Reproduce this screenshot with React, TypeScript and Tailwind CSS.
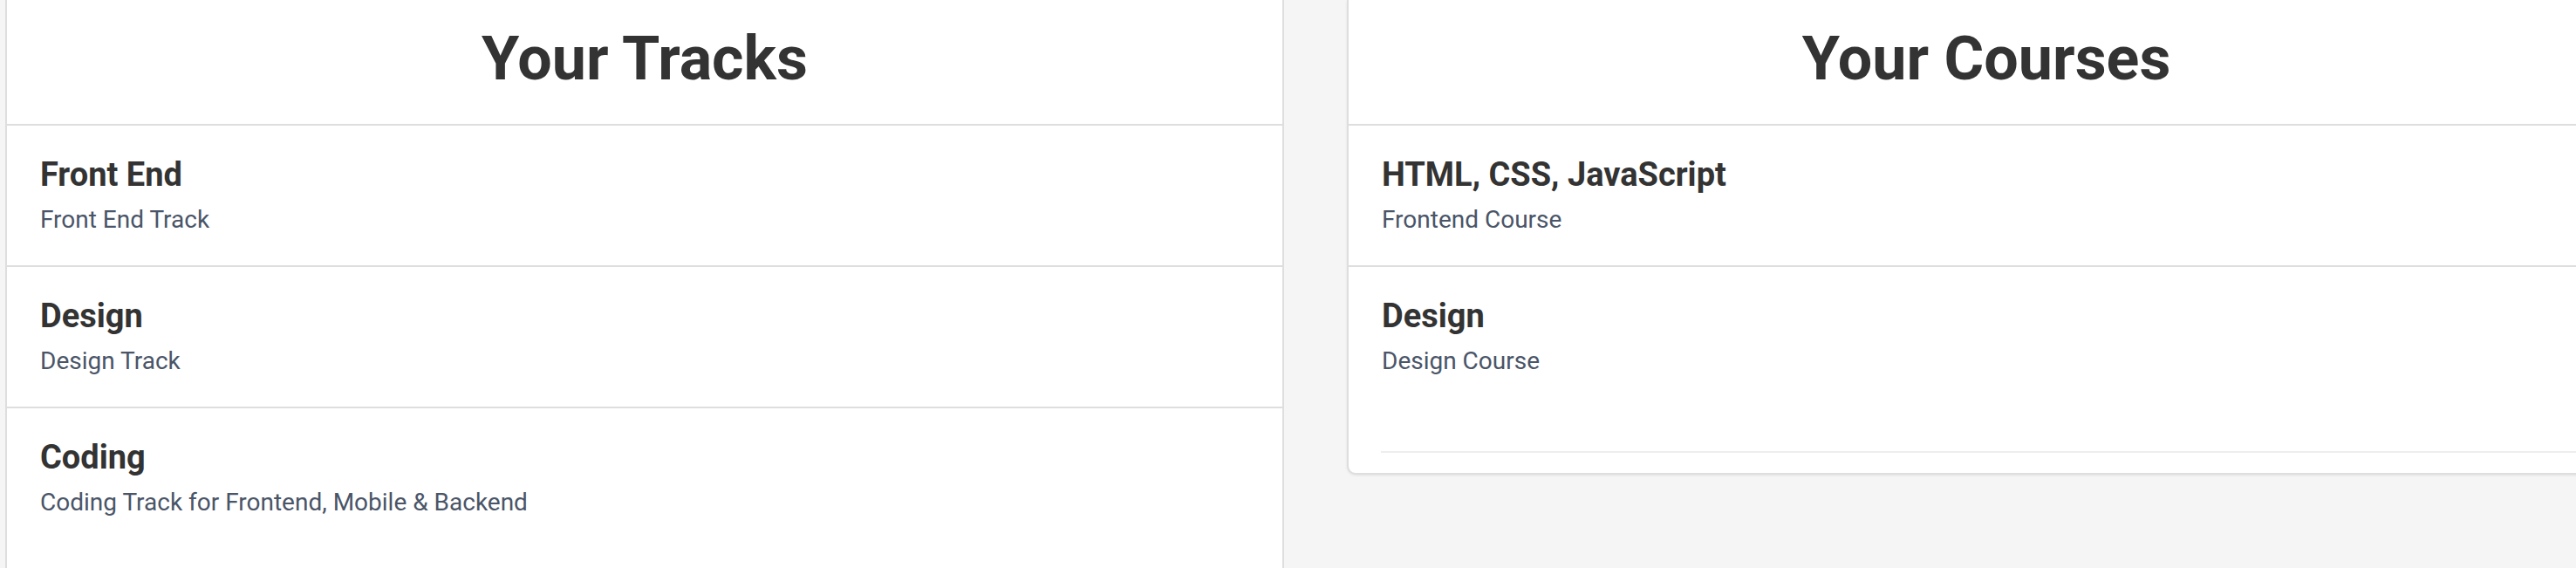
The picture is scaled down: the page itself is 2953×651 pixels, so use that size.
import React from "react";

type Item = { title: string; sub: string };

const tracks: Item[] = [
  { title: "Front End", sub: "Front End Track" },
  { title: "Design", sub: "Design Track" },
  { title: "Coding", sub: "Coding Track for Frontend, Mobile & Backend" },
];

const courses: Item[] = [
  { title: "HTML, CSS, JavaScript", sub: "Frontend Course" },
  { title: "Design", sub: "Design Course" },
];

function Header({ text }: { text: string }) {
  return (
    <div className="pt-[25px] pb-[33px] border-b-2 border-[#dedede] text-center">
      <h1 className="text-[70px] leading-[84px] font-bold text-[#333333]">{text}</h1>
    </div>
  );
}

function Row({ item, last }: { item: Item; last?: boolean }) {
  return (
    <div
      className={
        last
          ? "pl-[38px] pt-[33px] pb-[34px]"
          : "pl-[38px] pt-[33px] pb-[34px] border-b-2 border-[#dedede]"
      }
    >
      <h3 className="text-[38px] leading-[46px] font-bold text-[#333333]">{item.title}</h3>
      <p className="mt-[11px] text-[28px] leading-[36px] text-[#4a5568]">{item.sub}</p>
    </div>
  );
}

export default function App() {
  return (
    <div
      className="h-[651px] w-full overflow-hidden bg-[#f5f5f5] flex items-start gap-[72px] pl-[6px]"
      style={{ fontFamily: "Roboto, 'Noto Sans', sans-serif" }}
    >
      <section className="w-[1466px] h-full shrink-0 bg-white border-x-2 border-[#dedede]">
        <Header text="Your Tracks" />
        {tracks.map((t, i) => (
          <Row key={t.title + i} item={t} last={i === tracks.length - 1} />
        ))}
      </section>
      <section className="w-[1466px] shrink-0 bg-white border-x-2 border-b-2 border-[#dedede] rounded-b-[10px] shadow-[0_1px_3px_rgba(0,0,0,0.08)]">
        <Header text="Your Courses" />
        {courses.map((c, i) => (
          <Row key={c.title + i} item={c} last={i === courses.length - 1} />
        ))}
        <div className="mt-[51px] mx-[37px] border-t-2 border-[#eeeeee] h-[25px]" />
      </section>
    </div>
  );
}
